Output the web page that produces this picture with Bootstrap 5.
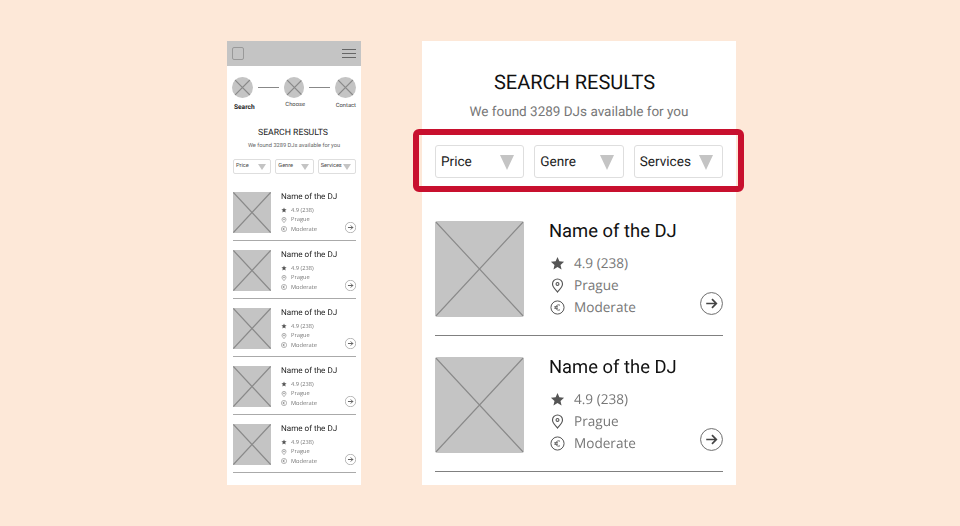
<!DOCTYPE html>
<html lang="en">
<head>
    <meta charset="UTF-8">
    <meta name="viewport" content="width=device-width, initial-scale=1.0">
    <title>Search results</title>
    <link href="https://cdn.jsdelivr.net/npm/bootstrap@5.3.2/dist/css/bootstrap.min.css" rel="stylesheet">
    <style>
        body { background: #fde8d8; height: 526px; overflow: hidden; font-family: Roboto, sans-serif; color: #1c1c1c; text-rendering: geometricPrecision; }
        .screens { padding: 41px 224px 0 227px; gap: 61px; opacity: .999; }
        .screen { background: #fff; height: 444px; }
        .screen-sm { width: 134px; overflow: hidden; }
        .screen-lg { width: 314px; padding: 0 13px; }
        .ph { background: #c4c4c4; display: block; }

        .topbar { background: #c4c4c4; height: 25px; padding: 0 5px; }
        .logo-box { width: 12px; height: 13px; border: 1px solid #999; border-radius: 2px; }
        .burger { width: 14px; height: 9px; border-top: 1px solid #666; border-bottom: 1px solid #666; position: relative; }
        .burger::after { content: ""; position: absolute; left: 0; right: 0; top: 3px; border-top: 1px solid #666; }
        .steps { padding: 11px 5px 0; }
        .step-line { width: 21px; height: 1px; background: #888; margin: 0 5px; }
        .labels { padding: 3px 5px 0 7px; font-size: 5.8px; color: #444; line-height: 9px; height: 12px; }
        .labels b { font-size: 6.6px; font-weight: 700; color: #222; margin-top: 2px; }
        .labels .last { margin-top: 1px; }
        .title-sm { font-size: 8.7px; text-align: center; margin: 17px 0 0; padding-right: 2px; line-height: 12px; color: #222; }
        .sub-sm { font-size: 5.7px; text-align: center; color: #666; margin: 3px 0 0; line-height: 8px; }
        .filters-sm { padding: 0 5px 0 6px; gap: 4px; margin-top: 9px; }
        .pick { border: 1px solid #dedede; }
        .filters-sm .pick { height: 15px; flex: 1 1 0; font-size: 5.6px; padding: 0 4px 0 2px; border-radius: 2px; color: #444; }
        .tri { border-style: solid; border-color: #c4c4c4 transparent transparent; display: block; flex: none; }
        .filters-sm .tri { border-width: 6px 4px 0; }

        .list-sm { padding: 18px 5px 0 6px; }
        .dj-sm { height: 58px; position: relative; }
        .dj-sm svg.ph { width: 38px; height: 41px; border-radius: 1px; }
        .dj-sm .info { margin-left: 10px; }
        .dj-sm .name { font-size: 8.100px; line-height: 10px; margin: -1px 0 5px; color: #222; }
        .dj-sm .meta { font-family: "Open Sans", sans-serif; font-size: 5.7px; line-height: 9.4px; color: #777; gap: 4px; }
        .dj-sm .meta svg { width: 6px; height: 6px; margin-top: -1px; }
        .dj-sm .go { width: 11px; height: 11px; right: 0; top: 30px; }
        .dj-sm .rule { top: 48px; border-color: #aaa; }

        .head-lg { padding-top: 29px; text-align: center; }
        .title-lg { font-size: 20px; line-height: 24px; margin: 0; padding-right: 9px; color: #111; }
        .sub-lg { font-size: 13.5px; line-height: 18px; color: #777; margin: 9px 0 0; }
        .filters-lg { gap: 10px; margin-top: 24px; }
        .filters-lg .pick { height: 33px; flex: 1 1 0; font-size: 13.6px; padding: 1px 9px 0 5px; border-radius: 3px; color: #222; }
        .filters-lg .tri { border-width: 15px 7.500px 0; }
        .redbox { position: absolute; left: -22px; right: -21px; top: -16px; bottom: -14px; border: 6px solid #c8102e; border-radius: 6px; pointer-events: none; }

        .list-lg { padding-top: 43px; }
        .dj-lg { height: 136px; position: relative; }
        .dj-lg svg.ph { width: 89px; height: 96px; border-radius: 3px; }
        .dj-lg .info { margin-left: 26px; }
        .dj-lg .name { font-size: 18.400px; line-height: 22px; margin: 0 0 9px; margin-left: -1px; color: #111; }
        .dj-lg .meta { font-family: "Open Sans", sans-serif; font-size: 13.6px; line-height: 22px; color: #777; gap: 9px; }
        .dj-lg .meta svg { width: 15px; height: 15px; }
        .dj-lg .go { width: 23px; height: 23px; right: 0; top: 71px; }
        .dj-lg .rule { top: 114px; }
        .go { position: absolute; }
        .rule { position: absolute; left: 0; right: 0; border-top: 1px solid #808080; }
    </style>
</head>
<body>
    <svg width="0" height="0" class="position-absolute">
        <symbol id="x-box" viewBox="0 0 100 100" preserveAspectRatio="none">
            <path d="M0 0L100 100M100 0L0 100" stroke="#8a8a8a" stroke-width="1.200" vector-effect="non-scaling-stroke" fill="none"/>
        </symbol>
        <symbol id="star" viewBox="0 0 24 24"><path d="M12 1.500l3 7 7.500.7-5.700 5 1.700 7.400L12 17.700l-6.500 3.900 1.700-7.400-5.700-5 7.500-.7z" fill="#555"/></symbol>
        <symbol id="pin" viewBox="0 0 24 24"><path d="M12 22.500C10.500 20 4 15 4 9.500a8 8 0 0 1 16 0C20 15 13.500 20 12 22.500z" fill="none" stroke="#555" stroke-width="1.800"/><circle cx="12" cy="9.500" r="2.300" fill="none" stroke="#555" stroke-width="1.800"/></symbol>
        <symbol id="euro" viewBox="0 0 24 24"><circle cx="12" cy="12" r="10.500" fill="none" stroke="#555" stroke-width="1.600"/><path d="M16 8.300A4.800 4.800 0 0 0 9 12a4.800 4.800 0 0 0 7 3.700M6.800 10.800h6M6.800 13.200h6" fill="none" stroke="#555" stroke-width="1.400"/></symbol>
        <symbol id="go" viewBox="0 0 24 24"><circle cx="12" cy="12" r="11.400" fill="#fff" stroke="#666" stroke-width="1"/><path d="M6.500 12h10.500M12.500 7.500l4.500 4.500-4.500 4.500" fill="none" stroke="#444" stroke-width="1.800"/></symbol>
    </svg>

    <div class="screens d-flex align-items-start">
        <!-- small screen -->
        <div class="screen screen-sm">
            <div class="topbar d-flex align-items-center justify-content-between">
                <span class="logo-box"></span>
                <span class="burger"></span>
            </div>
            <div class="steps d-flex align-items-center">
                <svg class="ph rounded-circle" width="21" height="21"><use href="#x-box"/></svg>
                <span class="step-line"></span>
                <svg class="ph rounded-circle" width="21" height="21"><use href="#x-box"/></svg>
                <span class="step-line"></span>
                <svg class="ph rounded-circle" width="21" height="21"><use href="#x-box"/></svg>
            </div>
            <div class="labels d-flex justify-content-between align-items-start">
                <b>Search</b><span>Choose</span><span class="last">Contact</span>
            </div>
            <p class="title-sm">SEARCH RESULTS</p>
            <p class="sub-sm">We found 3289 DJs available for you</p>
            <div class="filters-sm d-flex">
                <div class="pick d-flex align-items-center justify-content-between">Price<i class="tri"></i></div>
                <div class="pick d-flex align-items-center justify-content-between">Genre<i class="tri"></i></div>
                <div class="pick d-flex align-items-center justify-content-between">Services<i class="tri"></i></div>
            </div>
            <div class="list-sm" id="listSm"></div>
        </div>

        <!-- large screen -->
        <div class="screen screen-lg">
            <div class="head-lg">
                <h1 class="title-lg fw-normal">SEARCH RESULTS</h1>
                <p class="sub-lg">We found 3289 DJs available for you</p>
            </div>
            <div class="filters-lg d-flex position-relative">
                <div class="pick d-flex align-items-center justify-content-between">Price<i class="tri"></i></div>
                <div class="pick d-flex align-items-center justify-content-between">Genre<i class="tri"></i></div>
                <div class="pick d-flex align-items-center justify-content-between">Services<i class="tri"></i></div>
                <div class="redbox"></div>
            </div>
            <div class="list-lg" id="listLg"></div>
        </div>
    </div>

    <script>
        const fila = (clase) => `
            <div class="${clase} d-flex">
                <svg class="ph flex-shrink-0"><use href="#x-box"/></svg>
                <div class="info">
                    <p class="name">Name of the DJ</p>
                    <div class="meta d-flex align-items-center"><svg><use href="#star"/></svg>4.9 (238)</div>
                    <div class="meta d-flex align-items-center"><svg><use href="#pin"/></svg>Prague</div>
                    <div class="meta d-flex align-items-center"><svg><use href="#euro"/></svg>Moderate</div>
                </div>
                <svg class="go"><use href="#go"/></svg>
                <div class="rule"></div>
            </div>`;
        document.getElementById("listSm").innerHTML = fila("dj-sm").repeat(5);
        document.getElementById("listLg").innerHTML = fila("dj-lg").repeat(2);
    </script>
    <script src="https://cdn.jsdelivr.net/npm/bootstrap@5.3.2/dist/js/bootstrap.bundle.min.js"></script>
</body>
</html>
